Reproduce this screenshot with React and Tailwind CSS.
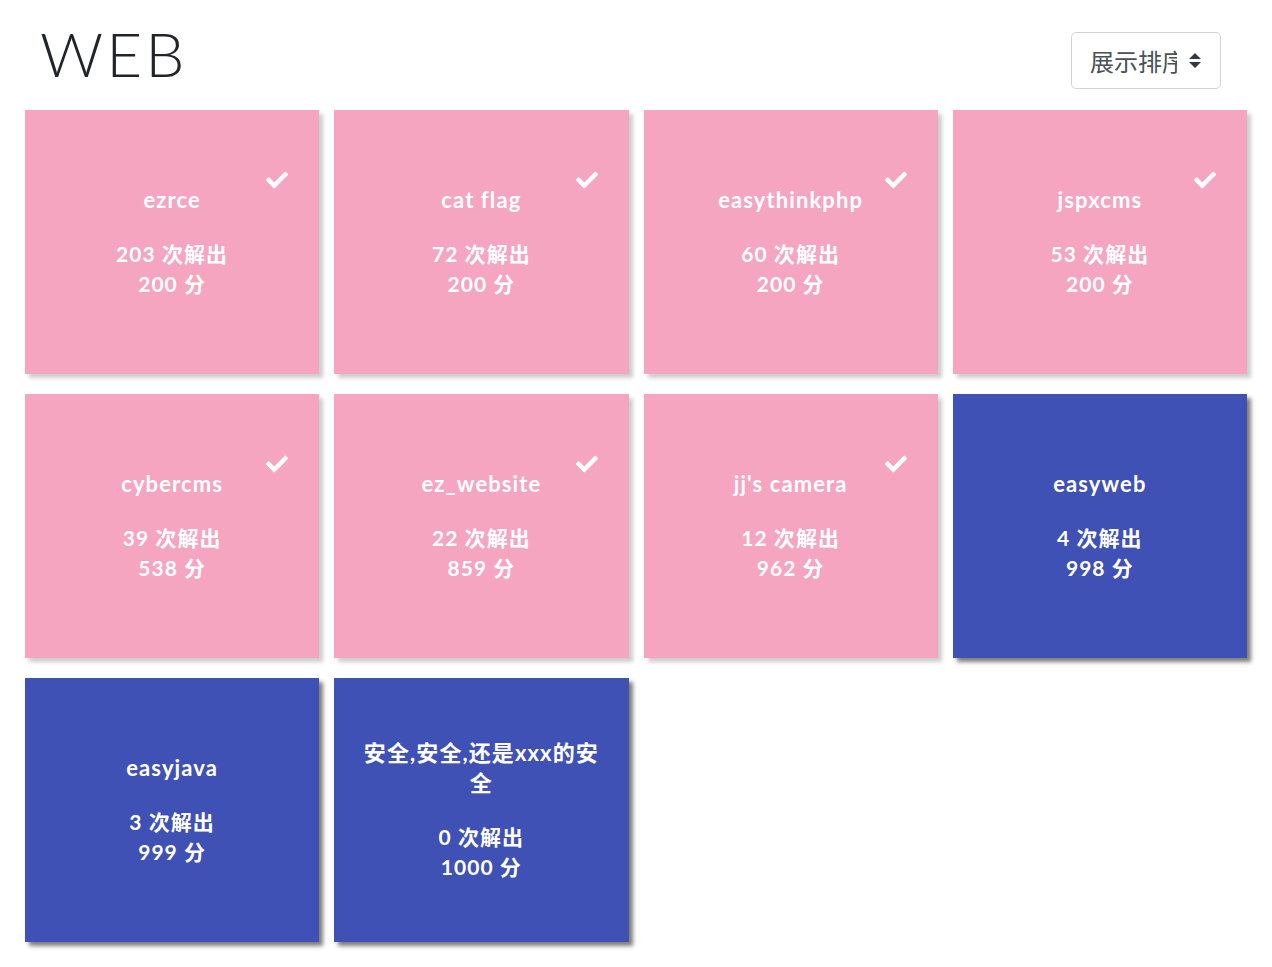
import { FaCheck } from "react-icons/fa";

const challenges = [
  { name: "ezrce", solves: 203, points: 200, solved: true },
  { name: "cat flag", solves: 72, points: 200, solved: true },
  { name: "easythinkphp", solves: 60, points: 200, solved: true },
  { name: "jspxcms", solves: 53, points: 200, solved: true },
  { name: "cybercms", solves: 39, points: 538, solved: true },
  { name: "ez_website", solves: 22, points: 859, solved: true },
  { name: "jj's camera", solves: 12, points: 962, solved: true },
  { name: "easyweb", solves: 4, points: 998, solved: false },
  { name: "easyjava", solves: 3, points: 999, solved: false },
  { name: "安全,安全,还是xxx的安全", solves: 0, points: 1000, solved: false },
];

function ChallengeCard({ name, solves, points, solved }) {
  const tone = solved
    ? "bg-[#f5a5bf] shadow-[4px_4px_4px_rgba(0,0,0,0.2)]"
    : "bg-[#3f51b5] shadow-[4px_4px_4px_rgba(0,0,0,0.5)]";
  return (
    <button
      type="button"
      className={`relative flex min-h-[264px] flex-col items-center justify-center gap-6 px-7 leading-[30px] font-bold text-white ${tone}`}
    >
      {solved && <FaCheck aria-hidden="true" className="absolute top-[59px] right-[31px] size-[22px]" />}
      <span className="block text-[22px] tracking-wider">{name}</span>
      <span className="block text-[21px] tracking-wider">
        {solves} 次解出
        <br />
        {points} 分
      </span>
    </button>
  );
}

function SortSelect() {
  return (
    <div className="relative">
      <select
        aria-label="展示排序"
        className="block h-[57px] w-[150px] appearance-none rounded-[5px] border border-[#ced4da] bg-white pr-[43px] pl-[18px] font-['Noto_Sans_CJK_SC',sans-serif] text-[24px] leading-9 text-[#495057]"
      >
        <option>展示排序</option>
      </select>
      <svg
        viewBox="0 0 4 5"
        aria-hidden="true"
        className="pointer-events-none absolute top-[21px] right-5 h-[15px] w-3 fill-[#343a40]"
      >
        <path d="M2 0L0 2h4zm0 5L0 3h4z" />
      </svg>
    </div>
  );
}

export default function App() {
  return (
    <main className="min-h-screen bg-white px-[25px] pt-8 pb-6 font-['Lato','Noto_Sans_CJK_SC',sans-serif]">
      <header className="mb-[21px] flex items-start justify-between pr-[26px] pl-[15px]">
        <h1 className="text-[62px] leading-[43px] font-light tracking-wider text-[#212529]">WEB</h1>
        <SortSelect />
      </header>
      <section className="grid grid-cols-4 gap-x-[15px] gap-y-5">
        {challenges.map((challenge) => (
          <ChallengeCard key={challenge.name} {...challenge} />
        ))}
      </section>
    </main>
  );
}
